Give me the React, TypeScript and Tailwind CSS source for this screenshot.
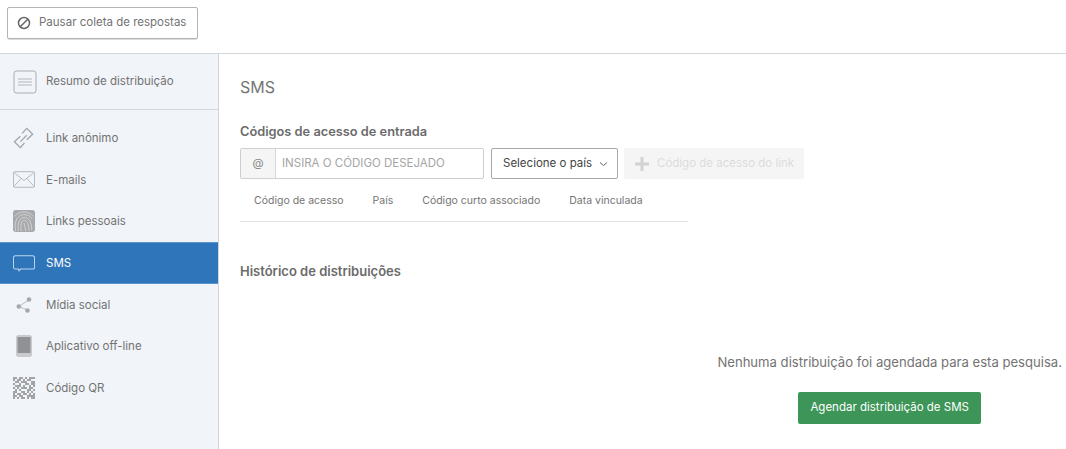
import type { ReactNode } from "react";

function SummaryIcon() {
	return (
		<svg width="24" height="24" viewBox="0 0 24 24" fill="none" stroke="#a9adb1">
			<rect x="1" y="1" width="22" height="22" rx="2.500" fill="#f1f4f8" />
			<path d="M5 9h14M5 12h14M5 15h14" stroke="#b4b7bb" />
		</svg>
	);
}

function LinkIcon() {
	return (
		<svg width="24" height="24" viewBox="0 0 24 24" fill="none" stroke="#a2a6aa" strokeWidth="1.400">
			<path d="M8 10 1.500 16 8 22.500l4.500-5" />
			<path d="M15 14l6.500-6L15 1.500l-5 5.500" />
			<path d="M8 16l7-7" />
		</svg>
	);
}

function MailIcon() {
	return (
		<svg width="23" height="17" viewBox="0 0 24 18" fill="none" stroke="#b0b4b8">
			<rect x="0.500" y="0.500" width="23" height="17" rx="1.500" />
			<path d="M1 1.500 12 10 23 1.500M1 16.500 9 8M23 16.500 15 8" />
		</svg>
	);
}

function FingerprintIcon() {
	return (
		<svg width="22" height="22" viewBox="0 0 24 24" fill="none">
			<rect width="24" height="24" rx="3" fill="#a7a9ab" />
			<g stroke="#d8dadc" strokeWidth="0.900">
				<path d="M3 23c-1-4-1-7 0-10 1-5 4.500-8 9-8s7 2 9 5" />
				<path d="M6 23c-1-4-.5-7 .5-10 1-3 3-5 5.500-5s6 2 7 5c1 3 1.500 6 1.500 9" />
				<path d="M9 23c-.500-4-.5-7 .5-9.500.6-1.500 1.500-2.500 2.500-2.500s3.300 1 4 3c.8 3 1.500 6 1.500 9" />
				<path d="M12 14c.500 3 1.500 6 2 9" />
				<path d="M2 7c2-3 5.500-5 10-5 4 0 8 2 10 5" />
			</g>
		</svg>
	);
}

function SmsIcon() {
	return (
		<svg width="22" height="17" viewBox="0 0 24 18" fill="none" stroke="#bcd5ec" strokeWidth="1.100">
			<path d="M2.500 0.600h19a2 2 0 0 1 2 2v11a1.500 1.500 0 0 1-1.500 1.500H8.500l-2 1.800-.5-1.800H2.500a2 2 0 0 1-2-2v-10.500a2 2 0 0 1 2-2z" />
		</svg>
	);
}

function ShareIcon() {
	return (
		<svg width="16" height="16" viewBox="0 0 16 16" fill="#a5a9ad" stroke="none">
			<path d="M3 9.500 12.500 3M3 9.500l9.500 4" stroke="#bcbfc3" strokeWidth="1" />
			<circle cx="2.800" cy="9.500" r="2.300" />
			<circle cx="13" cy="2.500" r="2.300" />
			<circle cx="11.500" cy="13.500" r="2.300" />
		</svg>
	);
}

function TabletIcon() {
	return (
		<svg width="16" height="22" viewBox="0 0 16 22">
			<rect x="0" y="0" width="16" height="22" rx="2.500" fill="#c8cacd" />
			<rect x="1.500" y="2" width="13" height="16" fill="#8f9194" />
		</svg>
	);
}

// pattern of the little QR square, one string per row
const QR_ROWS = [
	"11011010111",
	"10110101100",
	"01101110011",
	"10010011011",
	"01110100101",
	"10101110110",
	"01010001101",
	"11001101010",
	"10110110101",
	"11011001111",
	"10101101011",
];

function QrIcon() {
	return (
		<svg width="22" height="22" viewBox="0 0 22 22" fill="#a2a4a7">
			{QR_ROWS.flatMap((row, y) =>
				row.split("").map((cell, x) =>
					cell === "1" ? <rect key={`${x}-${y}`} x={x * 2} y={y * 2} width="2" height="2" /> : null,
				),
			)}
		</svg>
	);
}

function SideItem({ icon, label, active }: { icon: ReactNode; label: string; active?: boolean }) {
	return (
		<div
			className={`flex items-center pl-[13px] ${
				active
					? "h-[42px] border-y border-[#5b95cf] bg-[#2f75b9] text-white"
					: "h-[41.500px] text-[#737373]"
			}`}
		>
			<span className="flex w-[22px] items-center justify-center">{icon}</span>
			<span className="ml-[11px] mt-[1px] text-[11.500px]">{label}</span>
		</div>
	);
}

export default function App() {
	return (
		<div className="flex h-[449px] w-[1066px] flex-col overflow-hidden bg-white font-['Inter','Liberation_Sans',sans-serif] text-[#737373]">
			<div className="flex h-[54px] items-start border-b border-[#d3d6d9] pl-[7px] pt-[7px]">
				<button className="flex h-[32px] w-[191px] items-center rounded-[2px] border border-[#b4b4b4] pl-[9px] text-[11.500px] shadow-[0_1px_0_#ddd]">
					<svg width="14" height="14" viewBox="0 0 14 14" fill="none" stroke="#666" strokeWidth="1.500">
						<circle cx="7" cy="7" r="5.500" />
						<path d="M3.200 10.800 10.800 3.200" />
					</svg>
					<span className="ml-[8px]">Pausar coleta de respostas</span>
				</button>
			</div>
			<div className="flex flex-1">
				<aside className="w-[219px] border-r border-[#d3d6d9] bg-[#f1f4f8]">
					<div className="flex h-[56px] items-center border-b border-[#d3d6d9] pl-[13px]">
						<SummaryIcon />
						<span className="ml-[9px] mt-[1px] text-[11.500px]">Resumo de distribuição</span>
					</div>
					<div className="pt-[7.500px]">
						<SideItem icon={<LinkIcon />} label="Link anônimo" />
						<SideItem icon={<MailIcon />} label="E-mails" />
						<SideItem icon={<FingerprintIcon />} label="Links pessoais" />
						<SideItem icon={<SmsIcon />} label="SMS" active />
						<SideItem icon={<ShareIcon />} label="Mídia social" />
						<SideItem icon={<TabletIcon />} label="Aplicativo off-line" />
						<SideItem icon={<QrIcon />} label="Código QR" />
					</div>
				</aside>
				<main className="flex-1 pl-[21px] pt-[23px]">
					<h1 className="text-[16px] leading-[20px] text-[#757575]">SMS</h1>
					<h2 className="mt-[26px] text-[12.800px] font-semibold leading-[18px] text-[#6b6b6b]">
						Códigos de acesso de entrada
					</h2>
					<div className="mt-[7px] flex items-center">
						<div className="flex h-[31px] w-[244px] rounded-[2px] border border-[#cfcfcf] text-[11.500px]">
							<span className="flex w-[35px] items-center justify-center border-r border-[#d8d8d8] bg-[#f5f5f5] text-[#888]">@</span>
							<span className="flex items-center pl-[6px] text-[#a5a5a5]">INSIRA O CÓDIGO DESEJADO</span>
						</div>
						<button className="ml-[7px] flex h-[31px] w-[127px] items-center rounded-[2px] border border-[#a8a8a8] pl-[11px] text-[11.500px] text-[#444]">
							Selecione o país
							<svg className="ml-[7px]" width="9" height="6" viewBox="0 0 9 6" fill="none" stroke="#666">
								<path d="M1 1.500 4.500 4.500 8 1.500" />
							</svg>
						</button>
						<button className="ml-[6px] flex h-[31px] w-[180px] items-center rounded-[2px] bg-[#f5f5f5] pl-[11px] text-[11.500px] text-[#dcdcdc]">
							<svg width="14" height="14" viewBox="0 0 14 14" fill="#d2d2d2">
								<path d="M5.500 0h3v5.500H14v3H8.500V14h-3V8.500H0v-3h5.500z" />
							</svg>
							<span className="ml-[8px]">Código de acesso do link</span>
						</button>
					</div>
					<div className="flex h-[43px] w-[448px] items-center gap-[29px] border-b border-[#e3e3e3] pl-[14px] text-[10.500px] text-[#757575]">
						<span className="mt-[1px]">Código de acesso</span>
						<span className="mt-[1px]">País</span>
						<span className="mt-[1px]">Código curto associado</span>
						<span className="mt-[1px]">Data vinculada</span>
					</div>
					<h2 className="mt-[40px] text-[13px] font-semibold leading-[18px] text-[#6b6b6b]">
						Histórico de distribuições
					</h2>
					<div className="mr-[4px] ml-auto mt-[73px] flex w-fit flex-col items-center">
						<p className="text-[13.100px] leading-[18px] text-[#737373]">Nenhuma distribuição foi agendada para esta pesquisa.</p>
						<button className="mt-[21px] h-[32px] w-[183px] rounded-[2px] bg-[#3d9558] text-[11.500px] text-white">
							Agendar distribuição de SMS
						</button>
					</div>
				</main>
			</div>
		</div>
	);
}
